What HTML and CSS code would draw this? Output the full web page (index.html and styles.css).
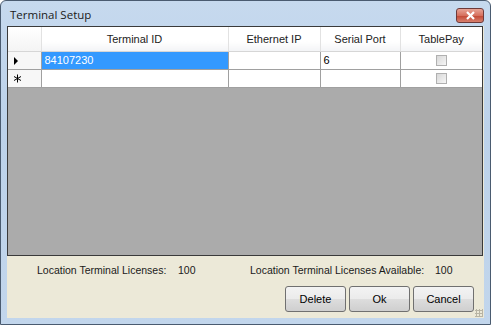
FILE: index.html
```html
<!DOCTYPE html>
<html lang="en">
<head>
    <meta charset="UTF-8">
    <title>Terminal Setup</title>
    <link rel="stylesheet" href="styles.css">
</head>
<body>

    <div class="window">
        <div class="titlebar">
            <span class="title">Terminal Setup</span>
            <div class="close-btn">
                <svg width="11" height="9" viewBox="0 0 11 9">
                    <path d="M2 1 L9 8 M9 1 L2 8" stroke="#fff" stroke-width="2.2" fill="none"/>
                </svg>
            </div>
        </div>

        <div class="client">
            <div class="grid">
                <table>
                    <tr class="head">
                        <th class="rowhead"></th>
                        <th class="c-id">Terminal ID</th>
                        <th class="c-ip">Ethernet IP</th>
                        <th class="c-port">Serial Port</th>
                        <th class="c-pay">TablePay</th>
                    </tr>
                    <tr>
                        <td class="rowhead"><span class="arrow"></span></td>
                        <td class="selected">84107230</td>
                        <td></td>
                        <td>6</td>
                        <td class="check"><span class="box"></span></td>
                    </tr>
                    <tr>
                        <td class="rowhead">
                            <svg class="star" width="9" height="9" viewBox="0 0 9 9">
                                <path d="M4.5 0.5 V8.5 M1 2.5 L8 6.5 M8 2.5 L1 6.5" stroke="#000" stroke-width="1" fill="none"/>
                            </svg>
                        </td>
                        <td></td>
                        <td></td>
                        <td></td>
                        <td class="check"><span class="box"></span></td>
                    </tr>
                </table>
            </div>

            <div class="licenses">
                <span>Location Terminal Licenses:</span>
                <span>100</span>
                <span>Location Terminal Licenses Available:</span>
                <span>100</span>
            </div>

            <div class="buttons">
                <button>Delete</button>
                <button>Ok</button>
                <button>Cancel</button>
            </div>
            <div class="grip"></div>
        </div>
    </div>

</body>
</html>
```

FILE: styles.css
```css
* {
    box-sizing: border-box;
}

body {
    margin: 0;
    background: #ffffff;
    font-family: "Liberation Sans", Arial, sans-serif;
    font-size: 11px;
    color: #000;
}

.window {
    width: 491px;
    height: 325px;
    border: 1px solid #4a5b70;
    border-radius: 6px 6px 0 0;
    background: linear-gradient(#c6d9ee, #bcd2ea 40%, #c2d6ec);
    padding: 0 6px 6px 6px;
    display: flex;
    flex-direction: column;
}

.titlebar {
    height: 25px;
    display: flex;
    align-items: center;
    justify-content: space-between;
    padding: 0 0 0 3px;
}

.title {
    font-family: "Open Sans", "DejaVu Sans", sans-serif;
    font-size: 11.5px;
    color: #1a1a1a;
    margin-top: 2px;
}

.close-btn {
    width: 28px;
    height: 15px;
    margin-top: 4px;
    border: 1px solid #6d3a3a;
    border-radius: 3px;
    background: linear-gradient(#e8a496, #d6705e 50%, #c34a36 55%, #d8806e);
    display: flex;
    align-items: center;
    justify-content: center;
}

.client {
    flex: 1;
    background: #ece9d8;
    position: relative;
    display: flex;
    flex-direction: column;
}

.grid {
    height: 230px;
    width: 476px;
    border: 1px solid #3a3a3a;
    background: #ababab;
}

table {
    border-collapse: collapse;
    table-layout: fixed;
    width: 474px;
}

th, td {
    border-right: 1px solid #a0a0a0;
    border-bottom: 1px solid #a0a0a0;
    padding: 0 3px;
    white-space: nowrap;
    overflow: hidden;
}

th {
    height: 24px;
    font-weight: normal;
    color: #222;
    background: linear-gradient(#ffffff, #ffffff 60%, #f3f4f6);
    border-right-color: #e2e2e2;
    border-bottom-color: #d6d6d6;
}

td {
    height: 18px;
    background: #ffffff;
}

.rowhead {
    width: 33px;
    background: #f7f7f7;
}

th.rowhead {
    background: linear-gradient(#ffffff, #f4f4f4);
}

td.rowhead {
    border-right-color: #a0a0a0;
}

.c-id { width: 187px; }
.c-ip { width: 92px; }
.c-port { width: 80px; }
.c-pay { width: 82px; border-right: none; }

td:last-child {
    border-right: none;
}

.selected {
    background: #3399ff;
    color: #ffffff;
}

.arrow {
    display: inline-block;
    margin-left: 3px;
    width: 0;
    height: 0;
    border-top: 4px solid transparent;
    border-bottom: 4px solid transparent;
    border-left: 4px solid #000;
    vertical-align: middle;
}

.star {
    display: block;
    margin-left: 2px;
}

.check {
    text-align: center;
}

.box {
    display: inline-block;
    width: 11px;
    height: 11px;
    border: 1px solid #b0b0b0;
    background: linear-gradient(135deg, #d8d8d8, #f6f6f6);
    vertical-align: middle;
}

.licenses {
    display: grid;
    grid-template-columns: 141px 72px 185px auto;
    padding: 8px 0 0 30px;
    color: #1a1a1a;
    font-size: 10.5px;
}

.buttons {
    display: flex;
    justify-content: flex-end;
    gap: 3px;
    padding: 10px 10px 0 0;
}

button {
    width: 61px;
    height: 26px;
    font-family: "Liberation Sans", Arial, sans-serif;
    font-size: 11px;
    color: #000;
    border: 1px solid #707070;
    border-radius: 3px;
    background: linear-gradient(#f3f3f3, #ebebeb 50%, #dddddd 51%, #cfcfcf);
    padding: 0;
}

.grip {
    position: absolute;
    right: 1px;
    bottom: 1px;
    width: 8px;
    height: 8px;
    background: radial-gradient(circle, #b8b4a4 1px, transparent 1.2px) 0 0 / 3px 3px;
}
```
